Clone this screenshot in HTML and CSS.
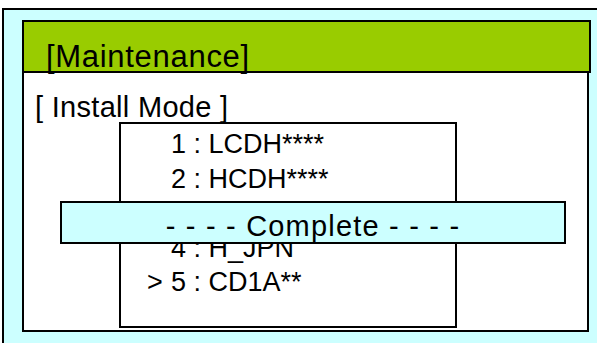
FILE: index.html
```html
<!DOCTYPE html>
<html>
<head>
<meta charset="utf-8">
<link rel="stylesheet" href="styles.css">
</head>
<body>
<div class="frame">
  <div class="panel">
    <div class="header"><span class="title">[Maintenance]</span></div>
    <div class="mode">[ Install Mode ]</div>
    <div class="list">
      <div class="row"><span class="mark"></span>1 : LCDH****</div>
      <div class="row"><span class="mark"></span>2 : HCDH****</div>
      <div class="row"><span class="mark"></span>3 : H_USA</div>
      <div class="row"><span class="mark"></span>4 : H_JPN</div>
      <div class="row"><span class="mark">&gt;</span>5 : CD1A**</div>
    </div>
  </div>
  <div class="complete">- - - - Complete - - - -</div>
</div>
</body>
</html>
```
FILE: styles.css
```css
html, body {
  margin: 0;
  padding: 0;
  background: #ffffff;
  overflow: hidden;
}
body {
  width: 597px;
  height: 343px;
  font-family: "Liberation Sans", Arial, sans-serif;
  color: #000;
}
.frame {
  position: relative;
  margin: 8px 0 0 2px;
  width: 595px;
  height: 335px;
  box-sizing: border-box;
  border-left: 2px solid #000;
  border-top: 2px solid #000;
  background: #ccffff;
  padding: 10px 0 0 18px;
}
.panel {
  width: 567px;
  height: 312px;
  box-sizing: border-box;
  border: 2px solid #000;
  border-top: none;
  background: #ffffff;
}
.header {
  margin: 0 -4px 0 -2px;
  height: 53px;
  box-sizing: border-box;
  border: 2px solid #000;
  background: #99cc00;
  padding: 19px 0 0 22px;
  font-size: 31px;
  line-height: 31px;
  letter-spacing: 0.7px;
}
.mode {
  margin-top: 20px;
  padding-left: 11px;
  font-size: 29px;
  line-height: 29px;
  letter-spacing: 0.3px;
}
.list {
  margin-left: 95px;
  width: 338px;
  height: 206px;
  box-sizing: border-box;
  border: 2px solid #000;
  background: #ffffff;
  padding: 3px 0 0 26px;
  font-size: 27px;
  line-height: 34.5px;
}
.row {
  display: flex;
  white-space: pre;
}
.mark {
  width: 24px;
  flex: none;
}
.complete {
  position: absolute;
  left: 56px;
  top: 191px;
  width: 506px;
  height: 43px;
  box-sizing: border-box;
  border: 2px solid #000;
  background: #ccffff;
  text-align: center;
  padding-top: 7px;
  font-size: 29px;
  line-height: 32px;
  letter-spacing: 1.2px;
  white-space: pre;
}
```
